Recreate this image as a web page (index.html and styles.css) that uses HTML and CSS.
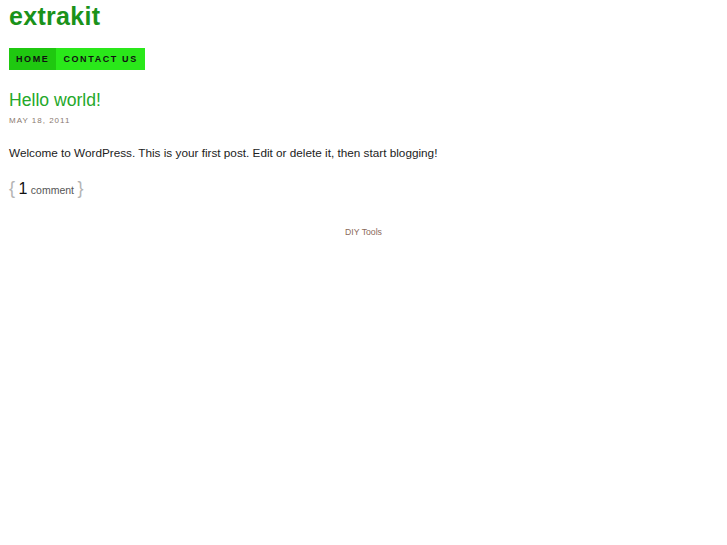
FILE: index.html
```html
<!DOCTYPE html>
<html>
<head>
<meta charset="utf-8">
<link rel="stylesheet" href="styles.css">
</head>
<body>
<div class="page">
  <h1 class="site-title">extrakit</h1>
  <ul class="nav">
    <li class="nav-item current">Home</li>
    <li class="nav-item">Contact Us</li>
  </ul>
  <div class="post">
    <h2 class="post-title">Hello world!</h2>
    <div class="post-date">May 18, 2011</div>
    <p class="post-body">Welcome to WordPress. This is your first post. Edit or delete it, then start blogging!</p>
    <div class="comments"><span class="brace">{</span> <span class="count">1</span> <span class="label">comment</span> <span class="brace">}</span></div>
  </div>
  <div class="footer">DIY Tools</div>
</div>
</body>
</html>
```

FILE: styles.css
```css
html, body {
  margin: 0;
  padding: 0;
  background: #fff;
}
body {
  font-family: "Liberation Sans", Arial, sans-serif;
  color: #222;
}
.page {
  padding: 0 9px;
}
.site-title {
  margin: 0;
  padding-top: 1px;
  font-size: 25px;
  line-height: 30px;
  font-weight: bold;
  color: #1a921a;
  letter-spacing: 0.3px;
}
.nav {
  list-style: none;
  margin: 17px 0 0 0;
  padding: 0;
  display: flex;
}
.nav-item {
  background: #2ae81a;
  color: #111;
  font-size: 9px;
  font-weight: bold;
  text-transform: uppercase;
  letter-spacing: 1.6px;
  height: 22px;
  line-height: 22px;
  padding: 0 7px;
}
.nav-item.current {
  background: #1fc810;
}
.post-title {
  margin: 19px 0 0 0;
  font-size: 17.6px;
  line-height: 22px;
  font-weight: normal;
  color: #25a82a;
}
.post-date {
  margin-top: 5px;
  font-size: 8px;
  line-height: 10px;
  letter-spacing: 1px;
  text-transform: uppercase;
  color: #8a7a70;
}
.post-body {
  margin: 19px 0 0 0;
  font-size: 11.75px;
  line-height: 16px;
  color: #222;
}
.comments {
  margin-top: 16px;
  line-height: 22px;
  color: #111;
  word-spacing: -1px;
}
.brace {
  font-size: 18px;
  color: #b4b4b4;
  font-weight: 300;
}
.count {
  font-size: 16px;
}
.label {
  font-size: 10.5px;
  color: #555;
}
.footer {
  margin-top: 26px;
  text-align: center;
  font-size: 8.7px;
  color: #8a6a5a;
}
```
